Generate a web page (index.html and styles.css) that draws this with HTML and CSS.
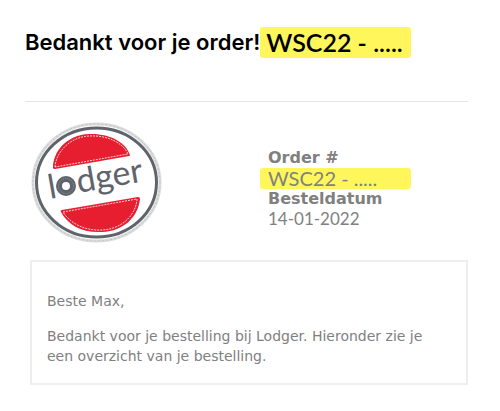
FILE: index.html
```
<!DOCTYPE html>
<html lang="nl">
<head>
    <meta charset="UTF-8">
    <meta name="viewport" content="width=device-width, initial-scale=1">
    <title>Bedankt voor je order!</title>
    <link rel="stylesheet" href="styles.css">
</head>
<body>
<div class="mail">
    <h1 class="title">Bedankt voor je order!<span class="mark">WSC22 - .....</span></h1>
    <div class="info">
        <div class="brand">
            <svg class="logo" width="131" height="121" viewBox="0 0 131 121" role="img" aria-label="lodger">
                <!-- badge edge -->
                <ellipse cx="65.5" cy="60.5" rx="63.5" ry="58.5" fill="#fff" stroke="#dcdcdc" stroke-width="3"/>
                <ellipse cx="65.5" cy="60.5" rx="63.5" ry="58.5" fill="none" stroke="#c2c2c2" stroke-width="1" stroke-dasharray="2 2"/>
                <ellipse cx="65.5" cy="60.5" rx="60" ry="54.5" fill="#fff" stroke="#5f646c" stroke-width="3"/>
                <!-- red patches with stitching -->
                <path d="M22 46C22 29 36 13 58 12C78 11 95 20 99 33Q99 34 98 34L24 47Q22 47 22 46Z" fill="#e61e30"/>
                <path d="M24 45C25 30 39 15 58 14C77 13 92 21 97 32Z" fill="none" stroke="#fff" stroke-width="0.8" stroke-dasharray="2 1"/>
                <path d="M30 90Q29 88 31 88L107 75Q109 75 109 77C107 95 93 109 71 110C51 111 37 103 30 90Z" fill="#e61e30"/>
                <path d="M32 90L106 77C105 93 91 107 71 108C53 109 39 101 32 90Z" fill="none" stroke="#fff" stroke-width="0.8" stroke-dasharray="2 1"/>
                <g transform="rotate(-10 35 64)">
                    <text class="logo-text" x="17" y="74">l</text>
                    <text class="logo-text" x="46" y="73">dger</text>
                </g>
                <circle cx="35" cy="64" r="7" fill="none" stroke="#5f646c" stroke-width="6"/>
                <circle cx="35" cy="64" r="7.5" fill="none" stroke="#90949a" stroke-width="1" stroke-dasharray="1 1"/>
            </svg>
        </div>
        <dl class="order">
            <dt>Order #</dt>
            <dd class="mark">WSC22 - .....</dd>
            <dt>Besteldatum</dt>
            <dd class="date">14-01-2022</dd>
        </dl>
    </div>
    <div class="message">
        <p>Beste Max,</p>
        <p>Bedankt voor je bestelling bij Lodger. Hieronder zie je een overzicht van je bestelling.</p>
    </div>
</div>
</body>
</html>
```
FILE: styles.css
```
*{ margin: 0; padding: 0; box-sizing: border-box;}
body { background: #fff; color: #808080; font-family: "DejaVu Sans", Verdana, sans-serif;}
.mail { padding: 27px 32px 27px 24px;}
.mark { background: #fff65c; border-radius: 3px;}
.title { display: flex; align-items: center; margin-left: 1px; padding-bottom: 43px;
    border-bottom: 1px solid #e5e5e5; color: #000;
    font-family: Inter, sans-serif; font-size: 22px; font-weight: 600; line-height: 31px;
    white-space: nowrap;}
.title .mark { padding: 0 8px 0 6px;
    font-family: Lato, sans-serif; font-size: 25px;}
.info { display: flex; padding: 20px 0 17px 7px;}
.brand { flex: 0 0 229px;}
.logo { display: block;}
.logo-text { fill: #5f646c; font-family: Lato, sans-serif; font-size: 34px;}
.order { width: 151px; padding-top: 26px; font-size: 16px; line-height: 20px;}
.order dt { padding-left: 8px; font-weight: bold;}
.order dd { padding-left: 8px; font-family: Lato, sans-serif; font-size: 20px;}
.order .mark { line-height: 21px;}
.order .date { font-size: 17px;}
.message { margin-left: 6px; padding: 29px 15px 17px; border: 2px solid #eee;
    font-size: 14px; line-height: 20px;}
.message p + p { margin-top: 15px;}
```
